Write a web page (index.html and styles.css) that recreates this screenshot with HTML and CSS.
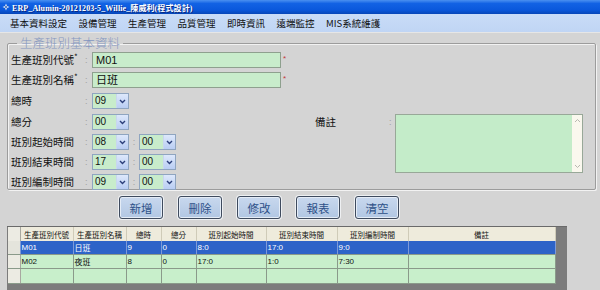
FILE: index.html
```html
<!DOCTYPE html>
<html lang="zh-Hant">
<head>
    <meta charset="UTF-8">
    <title>ERP_Alumin - 生產班別基本資料</title>
    <link rel="stylesheet" href="styles.css">
</head>
<body>
    <div class="titlebar">
        <svg class="app-icon" width="8" height="8" viewBox="0 0 8 8">
            <path d="M4 0.5 L5 3 L7.5 4 L5 5 L4 7.5 L3 5 L0.5 4 L3 3 Z" fill="#e8eef8"/>
            <circle cx="4" cy="4" r="1.2" fill="#5a7fc0"/>
        </svg>
        <span class="title">ERP_Alumin-20121203-5_Willie_陳威利(程式設計)</span>
    </div>

    <div class="menubar">
        <span>基本資料設定</span>
        <span>設備管理</span>
        <span>生產管理</span>
        <span>品質管理</span>
        <span>即時資訊</span>
        <span>遠端監控</span>
        <span>MIS系統維護</span>
    </div>

    <div class="page">
        <fieldset class="panel">
            <legend>生產班別基本資料</legend>
            <div class="form-grid">
                <span class="lbl lbl-note">備註</span>
                <span class="colon colon-note">:</span>
                <div class="note">
                    <div class="note-scroll">
                        <svg width="7" height="5" viewBox="0 0 7 5"><path d="M1 4 L3.5 1.5 L6 4" fill="none" stroke="#b8b8b0" stroke-width="1"/></svg>
                        <svg width="7" height="5" viewBox="0 0 7 5"><path d="M1 1 L3.5 3.5 L6 1" fill="none" stroke="#b8b8b0" stroke-width="1"/></svg>
                    </div>
                </div>

                <span class="lbl">生產班別代號<sup>*</sup></span>
                <span class="colon">:</span>
                <div class="ctrl"><span class="text-input">M01</span><span class="req">*</span></div>

                <span class="lbl">生產班別名稱<sup>*</sup></span>
                <span class="colon">:</span>
                <div class="ctrl"><span class="text-input">日班</span><span class="req">*</span></div>

                <span class="lbl">總時</span>
                <span class="colon">:</span>
                <div class="ctrl"><span class="combo"><span class="val">09</span><span class="arrow"><svg width="7" height="5" viewBox="0 0 7 5"><path d="M1 1 L3.5 3.5 L6 1" fill="none" stroke="#2c3f7a" stroke-width="1.4"/></svg></span></span></div>

                <span class="lbl">總分</span>
                <span class="colon">:</span>
                <div class="ctrl"><span class="combo"><span class="val">00</span><span class="arrow"><svg width="7" height="5" viewBox="0 0 7 5"><path d="M1 1 L3.5 3.5 L6 1" fill="none" stroke="#2c3f7a" stroke-width="1.4"/></svg></span></span></div>

                <span class="lbl">班別起始時間</span>
                <span class="colon">:</span>
                <div class="ctrl">
                    <span class="combo"><span class="val">08</span><span class="arrow"><svg width="7" height="5" viewBox="0 0 7 5"><path d="M1 1 L3.5 3.5 L6 1" fill="none" stroke="#2c3f7a" stroke-width="1.4"/></svg></span></span>
                    <span class="sep">:</span>
                    <span class="combo"><span class="val">00</span><span class="arrow"><svg width="7" height="5" viewBox="0 0 7 5"><path d="M1 1 L3.5 3.5 L6 1" fill="none" stroke="#2c3f7a" stroke-width="1.4"/></svg></span></span>
                </div>

                <span class="lbl">班別結束時間</span>
                <span class="colon">:</span>
                <div class="ctrl">
                    <span class="combo"><span class="val">17</span><span class="arrow"><svg width="7" height="5" viewBox="0 0 7 5"><path d="M1 1 L3.5 3.5 L6 1" fill="none" stroke="#2c3f7a" stroke-width="1.4"/></svg></span></span>
                    <span class="sep">:</span>
                    <span class="combo"><span class="val">00</span><span class="arrow"><svg width="7" height="5" viewBox="0 0 7 5"><path d="M1 1 L3.5 3.5 L6 1" fill="none" stroke="#2c3f7a" stroke-width="1.4"/></svg></span></span>
                </div>

                <span class="lbl">班別編制時間</span>
                <span class="colon">:</span>
                <div class="ctrl">
                    <span class="combo"><span class="val">09</span><span class="arrow"><svg width="7" height="5" viewBox="0 0 7 5"><path d="M1 1 L3.5 3.5 L6 1" fill="none" stroke="#2c3f7a" stroke-width="1.4"/></svg></span></span>
                    <span class="sep">:</span>
                    <span class="combo"><span class="val">00</span><span class="arrow"><svg width="7" height="5" viewBox="0 0 7 5"><path d="M1 1 L3.5 3.5 L6 1" fill="none" stroke="#2c3f7a" stroke-width="1.4"/></svg></span></span>
                </div>
            </div>
        </fieldset>

        <div class="actions">
            <button class="btn">新增</button>
            <button class="btn">刪除</button>
            <button class="btn">修改</button>
            <button class="btn">報表</button>
            <button class="btn">清空</button>
        </div>

        <div class="grid">
            <table class="grid-table">
                <colgroup>
                    <col style="width: 12px">
                    <col style="width: 53px">
                    <col style="width: 53px">
                    <col style="width: 35px">
                    <col style="width: 35px">
                    <col style="width: 70px">
                    <col style="width: 71px">
                    <col style="width: 71px">
                    <col style="width: 147px">
                </colgroup>
                <thead>
                    <tr>
                        <th class="ind"></th>
                        <th>生產班別代號</th>
                        <th>生產班別名稱</th>
                        <th>總時</th>
                        <th>總分</th>
                        <th>班別起始時間</th>
                        <th>班別結束時間</th>
                        <th>班別編制時間</th>
                        <th>備註</th>
                    </tr>
                </thead>
                <tbody>
                    <tr class="selected">
                        <td class="ind"></td>
                        <td>M01</td>
                        <td>日班</td>
                        <td>9</td>
                        <td>0</td>
                        <td>8:0</td>
                        <td>17:0</td>
                        <td>9:0</td>
                        <td></td>
                    </tr>
                    <tr>
                        <td class="ind"></td>
                        <td>M02</td>
                        <td>夜班</td>
                        <td>8</td>
                        <td>0</td>
                        <td>17:0</td>
                        <td>1:0</td>
                        <td>7:30</td>
                        <td></td>
                    </tr>
                    <tr class="new-row">
                        <td class="ind"></td>
                        <td></td>
                        <td></td>
                        <td></td>
                        <td></td>
                        <td></td>
                        <td></td>
                        <td></td>
                        <td></td>
                    </tr>
                </tbody>
            </table>
        </div>
    </div>
</body>
</html>
```

FILE: styles.css
```css
body {
    margin: 0;
    width: 600px;
    height: 290px;
    overflow: hidden;
    background: #d4d4d4;
    font-family: 'Liberation Sans', 'Noto Sans CJK TC', sans-serif;
    color: #111;
}
.titlebar {
    height: 14px;
    display: flex;
    align-items: center;
    padding-left: 2px;
    background: linear-gradient(#4a90f0, #1262e4 25%, #0a58dc 70%, #0646b8);
}
.app-icon {
    margin-right: 2px;
}
.title {
    color: #fff;
    font-family: 'Liberation Serif', 'Noto Sans CJK TC', serif;
    font-weight: bold;
    font-size: 8px;
    letter-spacing: 0.1px;
    text-shadow: 1px 1px 0 #0a2a80;
}
.menubar {
    height: 18px;
    display: flex;
    align-items: center;
    gap: 11.5px;
    padding-left: 10px;
    background: linear-gradient(#c9dcf7, #c0d5f4);
    border-bottom: 1px solid #e6e6e6;
    font-family: 'Noto Sans CJK TC', sans-serif;
    font-size: 9.5px;
}
.page {
    padding: 0 4px 0 7px;
}
.panel {
    margin: 2px 0 0;
    padding: 0 0 0 3px;
    height: 155px;
    box-sizing: border-box;
    border: 1px solid #9c9c9c;
    border-radius: 2px;
    box-shadow: 1px 1px 0 #f2f2f2, inset 1px 1px 0 #f2f2f2;
}
.panel legend {
    margin-left: 6px;
    padding: 0 3px;
    font-family: 'Noto Sans CJK TC', sans-serif;
    font-weight: 300;
    font-size: 12.5px;
    line-height: 16px;
    color: #8597c0;
}
.form-grid {
    display: grid;
    grid-template-columns: 74px 7px 223px 74px 6px 188px;
    grid-template-rows: 20px 21px 21px 20px 20px 20px 17px;
    align-items: start;
}
.lbl, .colon, .ctrl {
    margin-top: 1px;
    height: 16px;
    line-height: 16px;
}
.lbl {
    grid-column: 1;
    font-family: 'Noto Sans CJK TC', sans-serif;
    font-size: 10.5px;
    white-space: nowrap;
}
.lbl sup {
    font-size: 8px;
    line-height: 0;
}
.colon {
    grid-column: 2;
}
.ctrl {
    grid-column: 3;
    display: flex;
    align-items: center;
}
.lbl-note {
    grid-column: 4;
    grid-row: 4;
}
.colon-note {
    grid-column: 5;
    grid-row: 4;
}
.colon, .sep {
    color: #a0a0a0;
    font-size: 9px;
}
.text-input {
    width: 189px;
    height: 16px;
    box-sizing: border-box;
    border: 1px solid #8ea08e;
    background: #c8eccb;
    padding-left: 3px;
    font-family: 'Liberation Sans', 'Noto Sans CJK TC', sans-serif;
    font-size: 11px;
    line-height: 14px;
}
.req {
    margin-left: 2px;
    color: #c23a3a;
    font-size: 8px;
    line-height: 8px;
    align-self: flex-start;
    margin-top: 3px;
}
.combo {
    display: flex;
    width: 37px;
    height: 16px;
    box-sizing: border-box;
    border: 1px solid #8fa5c0;
    background: #c8eccb;
}
.combo .val {
    flex: 1;
    padding-left: 2px;
    font-size: 10px;
    line-height: 14px;
}
.combo .arrow {
    width: 11px;
    display: flex;
    align-items: center;
    justify-content: center;
    background: linear-gradient(#dde8fb, #b9cdf3);
    border-left: 1px solid #c8d6ee;
}
.sep {
    width: 10px;
    text-align: center;
}
.note {
    grid-column: 6;
    grid-row: 4 / span 3;
    margin-top: 1px;
    height: 59px;
    box-sizing: border-box;
    border: 1px solid #98a898;
    background: #c4ecc9;
    display: flex;
    justify-content: flex-end;
}
.note-scroll {
    width: 10px;
    background: #faf8ee;
    display: flex;
    flex-direction: column;
    justify-content: space-between;
    align-items: center;
    padding: 3px 0;
}
.actions {
    display: flex;
    gap: 15px;
    margin: 6px 0 0 112px;
}
.btn {
    width: 44px;
    height: 23px;
    padding: 0;
    border: 1px solid #3f4b5e;
    border-radius: 3px;
    background: linear-gradient(#c8d8ee, #b2c7e3);
    box-shadow: inset 0 0 0 1px #e4ecf6, 0 0 0 1px #eef0f2;
    color: #2d5088;
    font-family: 'Noto Sans CJK TC', sans-serif;
    font-size: 11.5px;
}
.grid {
    margin-top: 7px;
    width: 560px;
    height: 70px;
    background: #7c7c7c;
    border-top: 1px solid #6a6a6a;
}
.grid-table {
    width: 547px;
    margin-left: 1px;
    table-layout: fixed;
    border-collapse: collapse;
    font-family: 'Liberation Sans', 'Noto Sans CJK TC', sans-serif;
    font-size: 8px;
}
.grid-table th {
    height: 14px;
    padding: 0;
    background: #eeebdc;
    border-right: 1px solid #cfcbb8;
    font-family: 'Noto Sans CJK TC', sans-serif;
    font-weight: normal;
    font-size: 7.5px;
    white-space: nowrap;
    overflow: hidden;
}
.grid-table td {
    height: 13px;
    padding: 0 0 0 1px;
    background: #c8efcb;
    border-right: 1px solid #8a9a8a;
    border-bottom: 1px solid #8a9a8a;
    white-space: nowrap;
    overflow: hidden;
}
.grid-table .ind {
    background: #ecebe3;
    border-right: 1px solid #a8a8a0;
}
.grid-table tr.selected td {
    background: #2d63c8;
    color: #fff;
    border-right-color: #7e9ad8;
}
.grid-table tr.selected td.ind {
    background: #e4e4dc;
}
.grid-table tr.new-row td {
    height: 14px;
}
```
